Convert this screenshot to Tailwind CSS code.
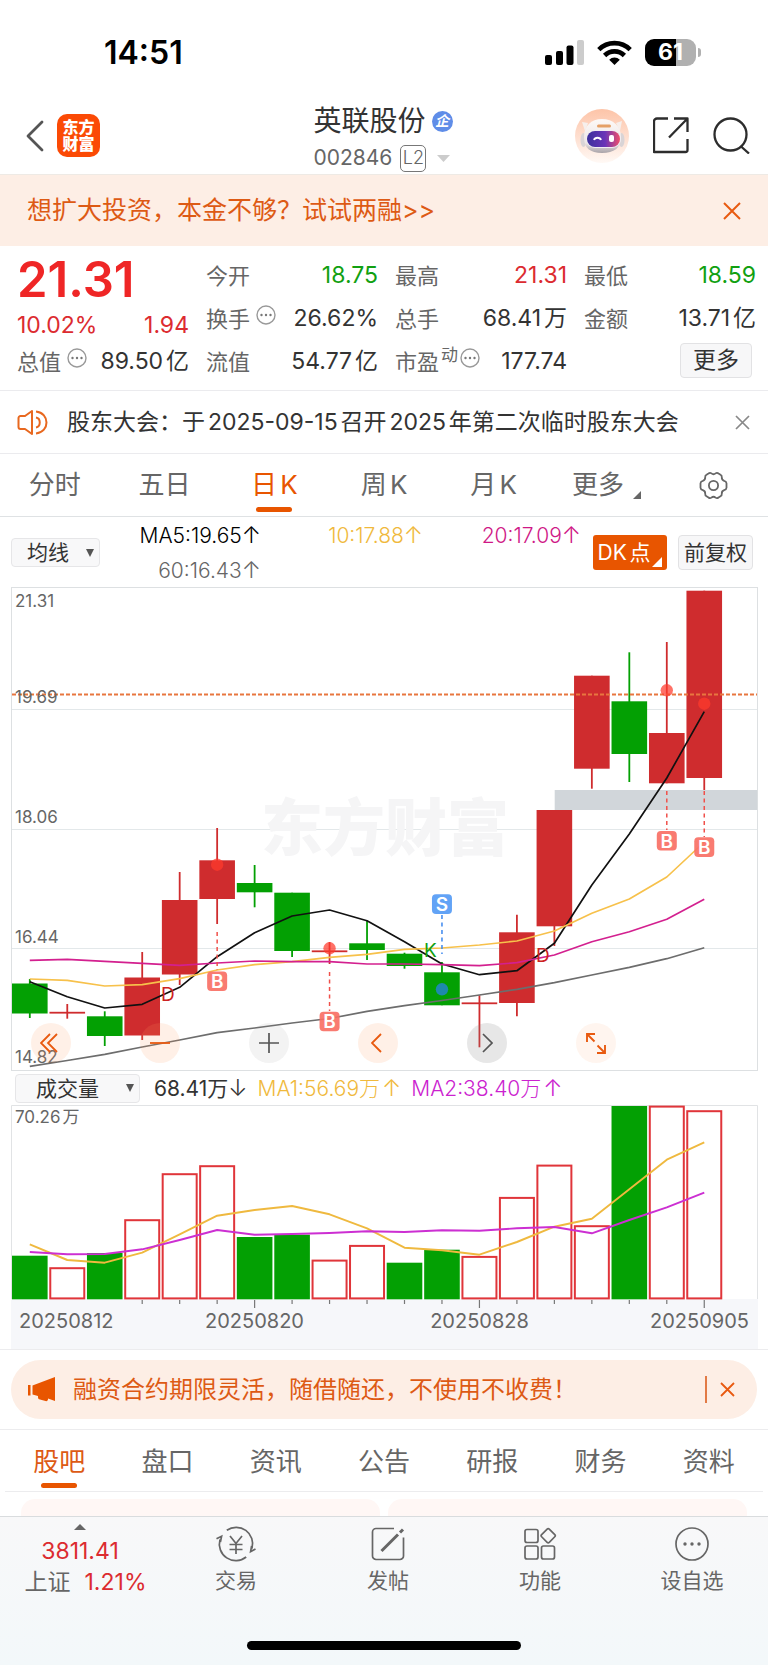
<!DOCTYPE html>
<html lang="zh-CN">
<head>
<meta charset="utf-8">
<meta name="viewport" content="width=device-width, initial-scale=1">
<title>英联股份 002846</title>
<script src="https://cdn.jsdelivr.net/npm/@tailwindcss/browser@4"></script>
</head>
<body class="bg-white font-['Inter','Noto_Sans_CJK_SC',sans-serif] text-[#333333]">
<div class="flex min-h-screen flex-col">

  <!-- Status bar -->
  <div class="flex h-[90px] items-center justify-between pt-[15px] pr-[67px] pl-[104px] text-black">
    <span class="text-[32px] leading-none font-semibold">14:51</span>
    <div class="flex items-center gap-[13px]">
      <svg class="h-[25px] w-[39px]" viewBox="0 0 39 25" aria-hidden="true">
        <rect x="0" y="15" width="7" height="10" rx="2"/><rect x="11" y="11" width="7" height="14" rx="2"/><rect x="21.500" y="5.500" width="7" height="19.500" rx="2"/><rect x="32" y="0" width="7" height="25" rx="2" fill="#cccccc"/>
      </svg>
      <svg class="h-[25px] w-[35px]" viewBox="0 0 35 25" aria-hidden="true">
        <g fill="none" stroke="#000" stroke-width="4.600">
          <path d="M1.800 9.600a22.200 22.200 0 0 1 31.400 0"/><path d="M7.600 15.500a14 14 0 0 1 19.800 0"/>
        </g>
        <path d="M17.500 25l-5.300-5.300a7.500 7.500 0 0 1 10.600 0z"/>
      </svg>
      <div class="flex items-center gap-[2px]">
        <div class="flex h-[27px] w-[51px] items-center justify-center rounded-[9px] bg-linear-to-r from-black from-61% to-[#b0b0b0] to-61% text-[23px] leading-none font-bold text-white">61</div>
        <div class="h-[9px] w-[3px] rounded-r-full bg-[#b0b0b0]"></div>
      </div>
    </div>
  </div>

  <!-- Header -->
  <header class="grid h-[85px] grid-cols-[1fr_auto_1fr] items-center border-b border-[#eeeae5] pt-[5px] pr-[18px] pl-[16px]">
    <div class="flex items-center gap-[13px] pl-[10px]">
      <button type="button" aria-label="返回" class="cursor-pointer">
        <svg class="h-[32px] w-[18px]" viewBox="0 0 18 32" fill="none" stroke="#555" stroke-width="2.800" stroke-linecap="round" stroke-linejoin="round"><path d="M16 2L2 16l14 14"/></svg>
      </button>
      <div class="flex h-[43px] w-[43px] items-center justify-center rounded-[10px] bg-[#fb4a05] text-center text-[16px] leading-[17px] font-black text-white">东方<br>财富</div>
    </div>
    <div class="flex flex-col items-start pt-[7px]">
      <div class="flex items-center gap-[6px]">
        <h1 class="text-[28px] leading-[38px]">英联股份</h1>
        <span class="flex h-[21px] w-[21px] items-center justify-center rounded-full bg-[#5f8de8] text-[14px] leading-none font-bold text-white italic">企</span>
      </div>
      <div class="flex items-center gap-[8px] text-[21px] leading-[36px] text-[#666666]">
        <span>002846</span>
        <span class="flex h-[27px] w-[26px] items-center justify-center rounded-[5px] border border-[#777777] text-[18px] leading-none font-light">L2</span>
        <svg class="ml-[3px] h-[7px] w-[13px]" viewBox="0 0 13 7" fill="#cccccc" aria-hidden="true"><path d="M0 0h13L6.500 7z"/></svg>
      </div>
    </div>
    <div class="flex items-center justify-end gap-[24px]">
      <button type="button" aria-label="智能助手" class="cursor-pointer">
        <svg class="h-[54px] w-[54px]" viewBox="0 0 54 54">
          <defs>
            <linearGradient id="halo" x1="0" y1="0" x2="0" y2="1"><stop offset="0" stop-color="#fdc4a8"/><stop offset=".6" stop-color="#fee3d6"/><stop offset="1" stop-color="#fff9f5"/></linearGradient>
            <linearGradient id="visor" x1="0" y1="0" x2="1" y2="0"><stop offset="0" stop-color="#3b2f9c"/><stop offset=".55" stop-color="#6a35b8"/><stop offset="1" stop-color="#f0506a"/></linearGradient>
            <linearGradient id="helmet" x1="0" y1="0" x2="0" y2="1"><stop offset="0" stop-color="#fdf9f7"/><stop offset=".7" stop-color="#ece6e6"/><stop offset="1" stop-color="#a9a3a8"/></linearGradient>
          </defs>
          <circle cx="27" cy="27" r="27" fill="url(#halo)"/>
          <path d="M7 13l6 1-3 8zM47 12l-6 2 4 8z" fill="#f6efec"/>
          <ellipse cx="8.500" cy="31" rx="3" ry="7" fill="#d9d4d6"/><ellipse cx="46.500" cy="31" rx="3" ry="7" fill="#d9d4d6"/>
          <path d="M27 10c11 0 19 7 19 18 0 11-7 16-19 16S9 39 9 28c0-11 7-18 18-18z" fill="url(#helmet)"/>
          <rect x="22" y="15.500" width="14" height="3" rx="1.500" fill="#e5a066"/>
          <rect x="11" y="21" width="35" height="18" rx="9" fill="#f2edf2"/>
          <rect x="12" y="22" width="33" height="16" rx="8" fill="url(#visor)"/>
          <path d="M19 31c1-3 6-3 7 0" fill="none" stroke="#fff" stroke-width="1.800"/><rect x="34" y="26" width="5" height="7" rx="2" fill="#fff"/>
        </svg>
      </button>
      <button type="button" aria-label="分享" class="cursor-pointer">
        <svg class="h-[37px] w-[36px]" viewBox="0 0 36 37" fill="none" stroke="#2d2d2d" stroke-width="2.300" stroke-linejoin="round"><path d="M15 1.500H4a3 3 0 0 0-3 3V35h31.500a2 2 0 0 0 2-2V22"/><path d="M21 1.500h13.500V15M34.500 1.500L16 20.500"/></svg>
      </button>
      <button type="button" aria-label="搜索" class="cursor-pointer">
        <svg class="h-[37px] w-[37px]" viewBox="0 0 37 37" fill="none" stroke="#2d2d2d" stroke-width="2.300"><circle cx="17.500" cy="17.500" r="16"/><path d="M27.500 29l8.500 7.500"/></svg>
      </button>
    </div>
  </header>

  <!-- Promo banner -->
  <div class="flex h-[71px] items-center justify-between bg-[#fdeee5] pr-[27px] pl-[27px] text-[#dd5a14]">
    <a href="#margin" class="text-[25px] leading-none">想扩大投资，本金不够？试试两融&gt;&gt;</a>
    <button type="button" aria-label="关闭" class="cursor-pointer">
      <svg class="h-[18px] w-[18px]" viewBox="0 0 18 18" stroke="#e85a10" stroke-width="2"><path d="M1 1l16 16M17 1L1 17"/></svg>
    </button>
  </div>

  <!-- Quote -->
  <section class="grid h-[145px] grid-cols-4 gap-x-[17px] border-b border-[#ebebee] pt-[8px] pr-[12px] pl-[17px] text-[23px] leading-none [text-autospace:normal]">
    <div class="flex flex-col">
      <div class="flex h-[51px] items-center text-[49px] font-semibold text-[#ef2626]">21.31</div>
      <div class="flex h-[40px] items-center justify-between text-[#dc2b30]"><span>10.02%</span><span>1.94</span></div>
      <div class="flex h-[33px] items-center justify-between whitespace-nowrap"><span class="flex items-center gap-[6px] text-[22px] text-[#666666]">总值
        <svg class="mb-2 h-[20px] w-[20px]" viewBox="0 0 20 20" aria-hidden="true"><circle cx="10" cy="10" r="9" fill="none" stroke="#999" stroke-width="1.400"/><g fill="#777"><circle cx="5.500" cy="10" r="1.200"/><circle cx="10" cy="10" r="1.200"/><circle cx="14.500" cy="10" r="1.200"/></g></svg></span><span>89.50亿</span></div>
    </div>
    <div class="flex flex-col">
      <div class="flex h-[43px] items-center justify-between"><span class="text-[22px] text-[#666666]">今开</span><span class="text-[#11a011]">18.75</span></div>
      <div class="flex h-[43px] items-center justify-between whitespace-nowrap"><span class="flex items-center gap-[6px] text-[22px] text-[#666666]">换手
        <svg class="mb-2 h-[20px] w-[20px]" viewBox="0 0 20 20" aria-hidden="true"><circle cx="10" cy="10" r="9" fill="none" stroke="#999" stroke-width="1.400"/><g fill="#777"><circle cx="5.500" cy="10" r="1.200"/><circle cx="10" cy="10" r="1.200"/><circle cx="14.500" cy="10" r="1.200"/></g></svg></span><span>26.62%</span></div>
      <div class="flex h-[43px] items-center justify-between"><span class="text-[22px] text-[#666666]">流值</span><span>54.77亿</span></div>
    </div>
    <div class="flex flex-col">
      <div class="flex h-[43px] items-center justify-between"><span class="text-[22px] text-[#666666]">最高</span><span class="text-[#dc2b30]">21.31</span></div>
      <div class="flex h-[43px] items-center justify-between"><span class="text-[22px] text-[#666666]">总手</span><span>68.41万</span></div>
      <div class="flex h-[43px] items-center justify-between whitespace-nowrap"><span class="flex items-center gap-[2px] text-[22px] text-[#666666]">市盈<span class="mb-3 text-[17px]">动</span>
        <svg class="mb-2 h-[20px] w-[20px]" viewBox="0 0 20 20" aria-hidden="true"><circle cx="10" cy="10" r="9" fill="none" stroke="#999" stroke-width="1.400"/><g fill="#777"><circle cx="5.500" cy="10" r="1.200"/><circle cx="10" cy="10" r="1.200"/><circle cx="14.500" cy="10" r="1.200"/></g></svg></span><span>177.74</span></div>
    </div>
    <div class="flex flex-col">
      <div class="flex h-[43px] items-center justify-between"><span class="text-[22px] text-[#666666]">最低</span><span class="text-[#11a011]">18.59</span></div>
      <div class="flex h-[43px] items-center justify-between"><span class="text-[22px] text-[#666666]">金额</span><span>13.71亿</span></div>
      <div class="flex h-[40px] items-center justify-end pr-[4px]"><button type="button" class="h-[35px] w-[72px] cursor-pointer rounded-[4px] border border-[#e2e2e4] bg-[#f7f7f8]">更多</button></div>
    </div>
  </section>

  <!-- Notice -->
  <section class="flex h-[63px] items-center border-b border-[#ebebee] pr-[18px] pl-[17px]">
    <svg class="h-[25px] w-[31px] shrink-0" viewBox="0 0 31 25" fill="none" stroke="#e8681f" stroke-width="2" stroke-linejoin="round" aria-hidden="true"><path d="M15 1v23L8 19H3.500a2 2 0 0 1-2-2V8a2 2 0 0 1 2-2H8z"/><path d="M19 7.500c5 .8 5 9.200 0 10" /><path d="M19 1.500c14 1.500 14 20.500 0 22"/></svg>
    <a href="#meeting" class="ml-[19px] grow text-[23px] leading-none whitespace-nowrap [text-autospace:normal]">股东大会：于2025-09-15召开2025年第二次临时股东大会</a>
    <button type="button" aria-label="关闭公告" class="cursor-pointer"><svg class="h-[15px] w-[15px]" viewBox="0 0 15 15" stroke="#888" stroke-width="1.700"><path d="M1 1l13 13M14 1L1 14"/></svg></button>
  </section>

  <!-- Period tabs -->
  <nav class="grid h-[63px] grid-cols-7 border-b border-[#dfe2e4] text-[26px] leading-none text-[#666666]">
    <button type="button" class="cursor-pointer">分时</button>
    <button type="button" class="cursor-pointer">五日</button>
    <button type="button" class="relative cursor-pointer text-[#e85500] [text-autospace:normal]">日K<span class="absolute bottom-[4px] left-1/2 h-[5px] w-[36px] -translate-x-1/2 rounded-full bg-[#e85500]"></span></button>
    <button type="button" class="cursor-pointer [text-autospace:normal]">周K</button>
    <button type="button" class="cursor-pointer [text-autospace:normal]">月K</button>
    <button type="button" class="flex cursor-pointer items-center justify-center gap-[9px] pl-[6px]">更多<svg class="mt-5 h-[8px] w-[8px]" viewBox="0 0 8 8" fill="#666" aria-hidden="true"><path d="M8 0v8H0z"/></svg></button>
    <button type="button" aria-label="设置" class="flex cursor-pointer items-center justify-center">
      <svg class="h-[29px] w-[29px]" viewBox="0 0 29 29" fill="none" stroke="#666" stroke-width="1.800" stroke-linejoin="round"><circle cx="14.500" cy="14.500" r="4.600"/><path d="M9.500 2.500Q11 1.200 12.400 2.400Q14.500 4.200 16.600 2.400Q18 1.200 19.500 2.500L21.500 3.700Q23 4.400 22.800 6.300Q22.600 9 25.200 9.800Q27.400 10.400 27.500 12.200V16.800Q27.400 18.600 25.200 19.200Q22.600 20 22.800 22.700Q23 24.600 21.500 25.300L19.500 26.500Q18 27.800 16.600 26.600Q14.500 24.800 12.400 26.600Q11 27.800 9.500 26.500L7.500 25.300Q6 24.600 6.200 22.700Q6.400 20 3.800 19.200Q1.600 18.600 1.500 16.800V12.200Q1.600 10.400 3.800 9.800Q6.400 9 6.200 6.300Q6 4.400 7.500 3.700z"/></svg>
    </button>
  </nav>

  <!-- Moving average legend -->
  <section class="flex h-[70px] items-center pr-[15px] pl-[11px] text-[21px] leading-none">
    <div class="relative w-[89px] shrink-0">
      <select aria-label="指标" class="h-[29px] w-full cursor-pointer appearance-none rounded-[4px] border border-[#e6e6e8] bg-[#f8f8f9] pl-[15px] text-[21px] leading-none"><option>均线</option></select>
      <svg class="pointer-events-none absolute top-[11px] right-[6px] h-[8px] w-[8px]" viewBox="0 0 8 8" fill="#555" aria-hidden="true"><path d="M0 0h8L4 8z"/></svg>
    </div>
    <div class="ml-[35px] grid grow grid-cols-[126px_162px_158px] pt-[2px] text-right leading-[34px] font-light">
      <span class="text-black">MA5:19.65<span class="text-[23px]">↑</span></span><span class="text-[#f0b93c]">10:17.88<span class="text-[23px]">↑</span></span><span class="text-[#cf1886]">20:17.09<span class="text-[23px]">↑</span></span>
      <span class="text-[#666666]">60:16.43<span class="text-[23px]">↑</span></span>
    </div>
    <div class="flex shrink-0 gap-[11px]">
      <button type="button" class="relative h-[35px] w-[74px] cursor-pointer rounded-[3px] bg-[#e85500] pr-[12px] text-white [text-autospace:normal]">DK点<svg class="absolute right-[5px] bottom-[3px] h-[10px] w-[10px]" viewBox="0 0 10 10" fill="#fff" aria-hidden="true"><path d="M10 0v10H0z"/></svg></button>
      <button type="button" class="h-[35px] w-[75px] cursor-pointer rounded-[4px] border border-[#e2e2e4] bg-[#f7f7f8] whitespace-nowrap">前复权</button>
    </div>
  </section>

  <!-- Candlestick chart -->
  <section class="relative mr-[10px] ml-[11px]">
    <svg id="kline" class="block h-auto w-full" viewBox="11 587 747 484" role="img" aria-label="日K线图">
      <rect x="11.500" y="587.500" width="746" height="483" fill="none" stroke="#dde0e2"/>
      <path d="M12 709.500h745M12 829.500h745M12 948.500h745" stroke="#e3e8ea" stroke-width="1.200"/>
      <text x="385" y="851" text-anchor="middle" class="fill-[#f5f5f6] text-[62px] font-black">东方财富</text>
      <rect x="554.700" y="790" width="202.500" height="20" fill="#d1d6da"/>
      <g id="candles"></g>
      <path d="M12 694.500h745" stroke="#e8763f" stroke-width="1.800" stroke-dasharray="4 2"/>
      <g id="averages" fill="none" stroke-width="1.700" stroke-linejoin="round"></g>
      <g id="signals"></g>
      <g class="fill-[#666666] text-[17px]">
        <text x="15" y="607">21.31</text><text x="15" y="703">19.69</text><text x="15" y="823">18.06</text><text x="15" y="943">16.44</text><text x="15" y="1063">14.82</text>
      </g>
      <g class="text-[19px]">
        <text x="161" y="1001" class="fill-[#cc2222]">D</text><text x="424" y="957" class="fill-[#11a011]">K</text><text x="536" y="962" class="fill-[#cc2222]">D</text>
      </g>
    </svg>
    <div class="absolute bottom-[8px] left-[20px] flex gap-[69px]">
      <button type="button" aria-label="最早" class="flex h-[40px] w-[40px] cursor-pointer items-center justify-center rounded-full bg-[#ff9a60]/15 pr-[4px]"><svg class="h-[20px] w-[18px]" viewBox="0 0 18 20" fill="none" stroke="#e85a10" stroke-width="1.800"><path d="M10 1L1 10l9 9M17 1l-9 9 9 9"/></svg></button>
      <button type="button" aria-label="缩小" class="flex h-[40px] w-[40px] cursor-pointer items-center justify-center rounded-full bg-[#ff9a60]/15"><svg class="h-[20px] w-[20px]" viewBox="0 0 20 20" fill="none" stroke="#e85a10" stroke-width="1.800"><path d="M0 10h20"/></svg></button>
      <button type="button" aria-label="放大" class="flex h-[40px] w-[40px] cursor-pointer items-center justify-center rounded-full bg-[#888888]/10"><svg class="h-[20px] w-[20px]" viewBox="0 0 20 20" fill="none" stroke="#555" stroke-width="1.700"><path d="M0 10h20M10 0v20"/></svg></button>
      <button type="button" aria-label="向前" class="flex h-[40px] w-[40px] cursor-pointer items-center justify-center rounded-full bg-[#ff9a60]/15 pr-[2px]"><svg class="h-[20px] w-[12px]" viewBox="0 0 12 20" fill="none" stroke="#e85a10" stroke-width="1.800"><path d="M10 1L1 10l9 9"/></svg></button>
      <button type="button" aria-label="向后" class="flex h-[40px] w-[40px] cursor-pointer items-center justify-center rounded-full bg-[#888888]/20"><svg class="h-[20px] w-[12px]" viewBox="0 0 12 20" fill="none" stroke="#555" stroke-width="1.700"><path d="M2 1l9 9-9 9"/></svg></button>
      <button type="button" aria-label="全屏" class="flex h-[40px] w-[40px] cursor-pointer items-center justify-center rounded-full bg-[#ff9a60]/10"><svg class="h-[21px] w-[20px]" viewBox="0 0 20 21" fill="none" stroke="#e85a10" stroke-width="1.900"><path d="M1 9V1h8M1 1l7.500 7.500M19 12v8h-8M19 20l-7.500-7.500"/></svg></button>
    </div>
  </section>

  <!-- Volume legend -->
  <section class="flex h-[34px] items-center pl-[15px] text-[21px] leading-none">
    <div class="relative w-[125px] shrink-0">
      <select aria-label="副图指标" class="h-[29px] w-full cursor-pointer appearance-none rounded-[4px] border border-[#e6e6e8] bg-[#f8f8f9] pl-[20px] text-[21px] leading-none"><option>成交量</option></select>
      <svg class="pointer-events-none absolute top-[10px] right-[6px] h-[8px] w-[8px]" viewBox="0 0 8 8" fill="#555" aria-hidden="true"><path d="M0 0h8L4 8z"/></svg>
    </div>
    <span class="ml-[14px]">68.41万<span class="text-[23px] font-light">↓</span></span><span class="ml-[10px] font-light text-[#f0b93c]">MA1:56.69万<span class="ml-[2px] text-[23px]">↑</span></span><span class="ml-[10px] font-light text-[#cb22cf]">MA2:38.40万<span class="ml-[2px] text-[23px]">↑</span></span>
  </section>

  <!-- Volume chart -->
  <section class="border-b border-[#ececee] pr-[10px] pl-[11px]">
    <svg class="block h-auto w-full" viewBox="11 1105 747 244" role="img" aria-label="成交量图">
      <rect x="11" y="1299" width="747" height="50" fill="#f6f7fa"/>
      <path d="M11.500 1299V1105.500H757.500V1299" fill="none" stroke="#e1e3e5"/>
      <g id="volumes"></g>
      <g id="volume-averages" fill="none" stroke-width="1.900" stroke-linejoin="round"></g>
      <text x="15" y="1123" class="fill-[#666666] text-[17px] [text-autospace:normal]">70.26万</text>
      <g class="fill-[#666666] text-[20px]">
        <text x="19" y="1328">20250812</text><text x="254.500" y="1328" text-anchor="middle">20250820</text><text x="479.500" y="1328" text-anchor="middle">20250828</text><text x="749" y="1328" text-anchor="end">20250905</text>
      </g>
    </svg>
  </section>

  <!-- Financing promo -->
  <section class="border-b border-[#ececee] pt-[10px] pr-[11px] pb-[10px] pl-[11px]">
    <div class="flex h-[59px] items-center rounded-full bg-[#fdeee5] pr-[22px] pl-[17px] text-[#dd5a14]">
      <svg class="h-[25px] w-[28px] shrink-0" viewBox="0 0 28 25" fill="#e85500" aria-hidden="true"><path d="M0 8h2.500v10.500H0zM4.500 8.500L27 0v24l-7-2.500v1a2 2 0 0 1-2.500 1.500L12 22.500a2 2 0 0 1-2-2V19l-5.500-1.500z"/></svg>
      <a href="#financing" class="ml-[17px] grow text-[24px] leading-none whitespace-nowrap">融资合约期限灵活，随借随还，不使用不收费！</a>
      <span class="h-[27px] w-[2px] bg-[#e27a45]"></span>
      <button type="button" aria-label="关闭提示" class="ml-[13px] cursor-pointer"><svg class="h-[15px] w-[15px]" viewBox="0 0 15 15" stroke="#e85a10" stroke-width="1.800"><path d="M1 1l13 13M14 1L1 14"/></svg></button>
    </div>
  </section>

  <!-- Content tabs -->
  <nav class="mx-[5px] grid h-[62px] grid-cols-7 border-b border-[#ececee] text-[26px] leading-none text-[#666666]">
    <button type="button" class="relative cursor-pointer pt-[2px] text-[#dd5a14]">股吧<span class="absolute bottom-[3px] left-1/2 h-[5px] w-[36px] -translate-x-1/2 rounded-full bg-[#e85500]"></span></button>
    <button type="button" class="cursor-pointer pt-[2px]">盘口</button>
    <button type="button" class="cursor-pointer pt-[2px]">资讯</button>
    <button type="button" class="cursor-pointer pt-[2px]">公告</button>
    <button type="button" class="cursor-pointer pt-[2px]">研报</button>
    <button type="button" class="cursor-pointer pt-[2px]">财务</button>
    <button type="button" class="cursor-pointer pt-[2px]">资料</button>
  </nav>
  <div class="grid h-[24px] grid-cols-2 gap-[8px] overflow-hidden px-[21px] pt-[7px]">
    <div class="h-[40px] rounded-[14px] bg-[#fff7f5]"></div>
    <div class="h-[40px] rounded-[14px] bg-[#fff7f5]"></div>
  </div>

  <!-- Bottom bar -->
  <footer class="flex grow flex-col justify-between border-t border-[#d9dcde] bg-linear-to-b from-[#f8f8f9] to-[#f3f8fa] pb-[15px]">
    <div class="flex text-[21px] leading-none text-[#666666]">
      <a href="#index" class="flex w-[160px] flex-col items-center pt-[7px]">
        <svg class="h-[6px] w-[12px]" viewBox="0 0 12 6" fill="#666" aria-hidden="true"><path d="M0 6h12L6 0z"/></svg>
        <span class="mt-[10px] text-[23px] text-[#dc2b30]">3811.41</span>
        <span class="mt-[8px] ml-[11px] flex gap-[14px] text-[23px]"><span>上证</span><span class="text-[#dc2b30]">1.21%</span></span>
      </a>
      <nav class="grid grow grid-cols-4">
        <a href="#trade" class="flex flex-col items-center gap-[8px] pt-[9px]">
          <svg class="h-[36px] w-[40px]" viewBox="0 0 40 36" fill="none" stroke="#666" stroke-width="1.700" aria-hidden="true"><path d="M10.800 4.200A16.500 16.500 0 0 1 36 22.400M30.200 31A16.500 16.500 0 0 1 4 13.600"/><path d="M.5 12.800L5.600 10.200L4.400 16M39.500 23L34.600 25.600L35.600 20"/><path d="M14 10l6 7.500 6-7.500M20 17.500V28M13.500 18.500h13M13.500 23.500h13"/></svg>
          <span>交易</span>
        </a>
        <a href="#post" class="flex flex-col items-center gap-[8px] pt-[9px]">
          <svg class="h-[36px] w-[36px]" viewBox="0 0 36 36" fill="none" stroke="#666" aria-hidden="true"><path stroke-width="1.700" d="M24 2.500H6A3.500 3.500 0 0 0 2.500 6v24A3.500 3.500 0 0 0 6 33.500h24a3.500 3.500 0 0 0 3.500-3.500V11.500"/><path stroke-width="3" d="M11.500 25L28 8.500M30 6.500L33 3.500"/></svg>
          <span>发帖</span>
        </a>
        <a href="#features" class="flex flex-col items-center gap-[8px] pt-[9px]">
          <svg class="h-[36px] w-[34px]" viewBox="0 0 34 36" fill="none" stroke="#666" stroke-width="1.700" aria-hidden="true"><rect x="2" y="3.500" width="13" height="13" rx="2"/><rect x="2" y="20" width="13" height="13" rx="2"/><rect x="18.500" y="20" width="13" height="13" rx="2"/><rect x="19.800" y="4.300" width="10.800" height="10.800" rx="1.500" transform="rotate(45 25.200 9.700)"/></svg>
          <span>功能</span>
        </a>
        <a href="#watchlist" class="flex flex-col items-center gap-[8px] pt-[9px]">
          <svg class="h-[36px] w-[36px]" viewBox="0 0 36 36" aria-hidden="true"><circle cx="18" cy="18" r="16" fill="none" stroke="#666" stroke-width="1.700"/><g fill="#666"><circle cx="11" cy="18" r="1.700"/><circle cx="18" cy="18" r="1.700"/><circle cx="25" cy="18" r="1.700"/></g></svg>
          <span>设自选</span>
        </a>
      </nav>
    </div>
    <div class="mx-auto h-[9px] w-[274px] rounded-full bg-black"></div>
  </footer>
</div>

<script>
const NS = 'http://www.w3.org/2000/svg';
const add = (parent, tag, attrs, text) => {
  const el = document.createElementNS(NS, tag);
  for (const k in attrs) el.setAttribute(k, attrs[k]);
  if (text) el.textContent = text;
  document.getElementById(parent).appendChild(el);
};
const X = i => 29.8 + i * 37.47;
const RED = '#cf2c2e', GREEN = '#03a003', W = 35.6;

// Each day: colour, body top, body bottom, wick top, wick bottom, volume bar top
const days = [
  ['g', 983.5, 1013.5, 979, 1018, 1255.7], ['r', 1011.8, 1013.6, 1004, 1018.7, 1267.3],
  ['g', 1016.3, 1036, 1011.3, 1046, 1253], ['r', 977.5, 1035.5, 952, 1040, 1219.3],
  ['r', 900, 974.5, 872, 985, 1173.3], ['r', 860.3, 899, 828, 924, 1165.3],
  ['g', 883, 892.3, 865, 907.3, 1237], ['g', 892.7, 951, 892.7, 957, 1234.7],
  ['r', 950.4, 952.2, 942, 964, 1259.7], ['g', 943.3, 950, 920.7, 960, 1245, 'r'],
  ['g', 953.7, 966, 952.7, 968.7, 1262.7], ['g', 972.3, 1005.3, 962, 1005.3, 1249.7],
  ['r', 1002.4, 1004.2, 995.3, 1047.3, 1256], ['r', 932.3, 1003, 914.7, 1016.3, 1197],
  ['r', 810, 926.3, 810, 946, 1164.7], ['r', 675.7, 768.7, 675.7, 788.7, 1225.3],
  ['g', 701.3, 754, 652.3, 782, 1106], ['r', 733, 783.3, 642, 783.3, 1105.7],
  ['r', 590.7, 778, 590.7, 790, 1110.3]
];
days.forEach(([c, t, b, wt, wb, v, vc], i) => {
  const color = c === 'r' ? RED : GREEN;
  add('candles', 'path', { d: `M${X(i)} ${wt}V${wb}`, stroke: color, 'stroke-width': 1.8 });
  add('candles', 'rect', { x: X(i) - W / 2, y: t, width: W, height: b - t, fill: color });
  if ((vc || c) === 'g') add('volumes', 'rect', { x: X(i) - W / 2, y: v, width: W, height: 1299.3 - v, fill: GREEN });
  else add('volumes', 'rect', { x: X(i) - 17, y: v + .9, width: 34, height: 1298.4 - v - .9, fill: '#fff', stroke: '#e0353a', 'stroke-width': 2 });
  if (i > 2) add('volumes', 'path', { d: `M${X(i)} 1300V${i % 6 ? 1304 : 1308}`, stroke: '#777', 'stroke-width': 1.2 });
});

const line = (parent, color, ys) => add(parent, 'polyline', { stroke: color, points: ys.map((y, i) => `${X(i)},${y}`).join(' ') });
line('averages', '#111111', [981.7, 996.7, 1008, 1004.3, 987.3, 956.7, 932.7, 916, 910, 920.7, 941.7, 964, 974.7, 970.7, 943.3, 885, 834, 778, 711.7]);
line('averages', '#f7c14b', [979, 980.3, 986, 984.7, 978.7, 970, 964.7, 961.7, 957.3, 954.3, 949.3, 948, 945, 941, 931, 913.3, 899, 877, 842]);
line('averages', '#d3208f', [960.3, 959.3, 961.3, 963.3, 965.3, 963, 961, 961.7, 961.7, 964, 964, 964.7, 965.7, 962.7, 955, 941.7, 931.7, 919.3, 899.3]);
line('averages', '#6d6d6d', [1066.3, 1060.5, 1054.3, 1047, 1040, 1032.7, 1028, 1023, 1018.5, 1011.3, 1005.7, 1000.5, 995, 989.3, 982.7, 975, 967.3, 958.7, 947.7]);
line('volume-averages', '#efb93f', [1244.3, 1260, 1262.7, 1252.7, 1234.3, 1215.7, 1210, 1206, 1214.3, 1228.3, 1247.7, 1250.3, 1254.7, 1242, 1226.7, 1218.7, 1189.3, 1159.7, 1142.3]);
line('volume-averages', '#cc2fd2', [1252, 1254.3, 1254, 1249.3, 1240, 1230, 1234.7, 1234, 1233, 1231.3, 1232, 1230.3, 1230.7, 1228.3, 1227, 1233.3, 1220, 1207.3, 1192.7]);

// Buy and sell marks: day, letter, dot y, dash start, dash end, badge top
[[5, 'B', 864.7, 932, 970, 971.5], [8, 'B', 948.3, 972, 1011, 1011.7], [11, 'S', 989.3, 915, 954, 894.3],
 [17, 'B', 690.3, 791, 830, 831], [18, 'B', 703.7, 791, 837, 837.3]].forEach(([i, s, dot, a, b, top]) => {
  const buy = s === 'B';
  add('signals', 'circle', { cx: X(i), cy: dot, r: 6.2, fill: buy ? '#ff3a2c' : '#2a7ff0', 'fill-opacity': .72 });
  add('signals', 'path', { d: `M${X(i)} ${a}V${b}`, stroke: buy ? '#f0504a' : '#3c88ef', 'stroke-width': 1.5, 'stroke-dasharray': '4 3.5' });
  add('signals', 'rect', { x: X(i) - 10, y: top, width: 20, height: 19.6, rx: 4, fill: buy ? '#f97065' : '#559bf5', 'fill-opacity': .92 });
  add('signals', 'text', { x: X(i), y: top + 16.5, 'text-anchor': 'middle', 'font-size': 19, 'font-weight': 600, fill: '#fff' }, s);
});
</script>
</body>
</html>
